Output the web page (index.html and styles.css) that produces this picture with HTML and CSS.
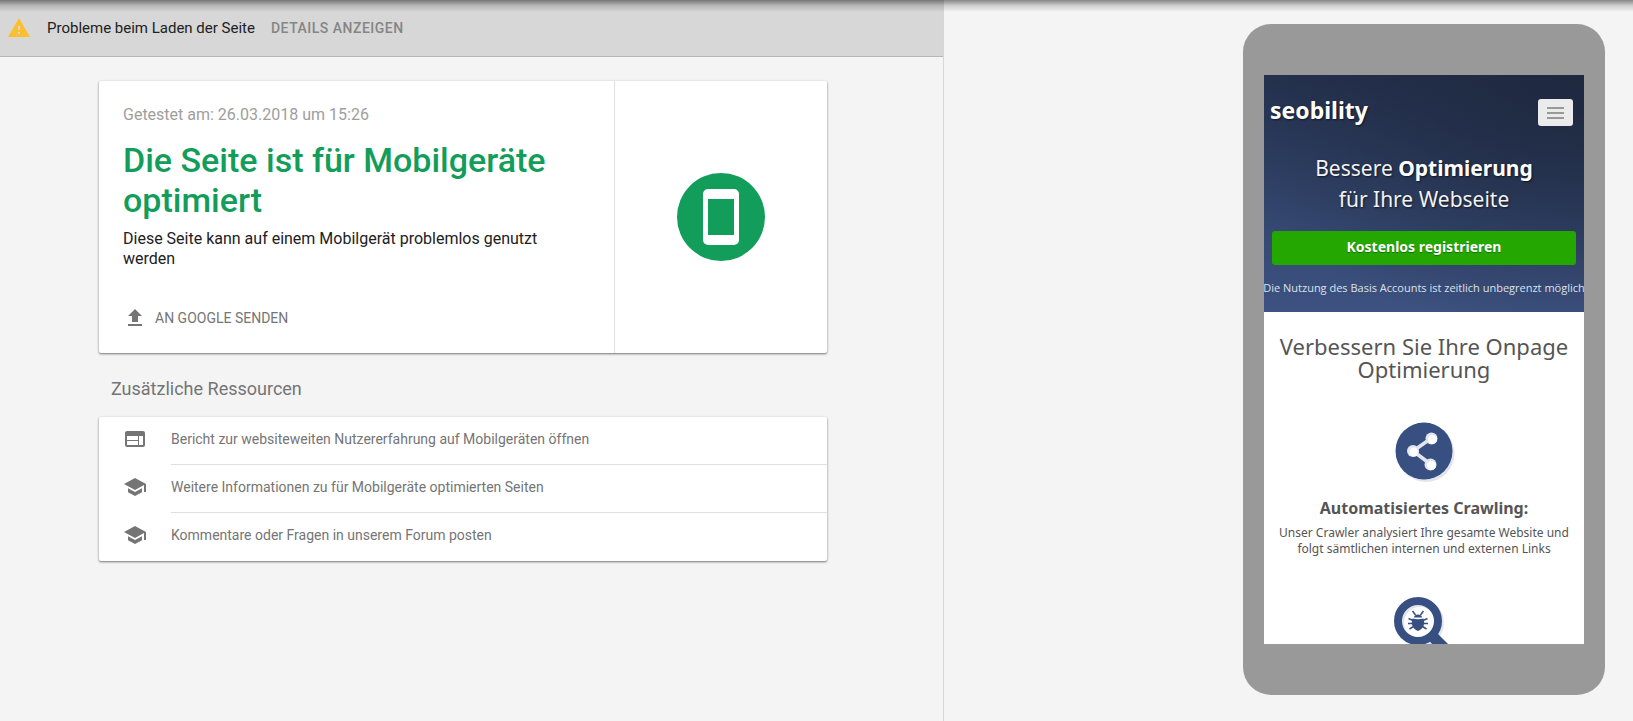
FILE: index.html
```html
<!DOCTYPE html>
<html lang="de">
<head>
<meta charset="utf-8">
<meta name="viewport" content="width=device-width, initial-scale=1">
<title>Test auf Optimierung für Mobilgeräte</title>
<link rel="stylesheet" href="styles.css">
</head>
<body>
<div class="page">
  <main class="results">
    <div class="notice">
      <svg class="icon notice-icon" viewBox="0 0 24 24" aria-hidden="true"><path d="M1 21h22L12 2 1 21zm12-3h-2v-2h2v2zm0-4h-2v-4h2v4z"/></svg>
      <span class="notice-text">Probleme beim Laden der Seite</span>
      <button class="text-button notice-button" type="button">DETAILS ANZEIGEN</button>
    </div>
    <div class="content">
      <section class="card verdict">
        <div class="verdict-body">
          <p class="tested">Getestet am: 26.03.2018 um 15:26</p>
          <h1 class="verdict-title">Die Seite ist für Mobilgeräte optimiert</h1>
          <p class="verdict-text">Diese Seite kann auf einem Mobilgerät problemlos genutzt werden</p>
          <button class="text-button submit" type="button">
            <svg class="icon" viewBox="0 0 24 24" aria-hidden="true"><path d="M9 16h6v-6h4l-7-7-7 7h4zm-4 2h14v2H5z"/></svg>
            AN GOOGLE SENDEN
          </button>
        </div>
        <div class="verdict-badge">
          <svg class="badge" viewBox="0 0 88 88" aria-hidden="true"><circle cx="44" cy="44" r="44" fill="#129d5a"/><path fill="#fff" fill-rule="evenodd" d="M31 16h26a5 5 0 0 1 5 5v46a5 5 0 0 1-5 5H31a5 5 0 0 1-5-5V21a5 5 0 0 1 5-5zm0 10v36h26V26z"/></svg>
        </div>
      </section>
      <h2 class="resources-title">Zusätzliche Ressourcen</h2>
      <ul class="card resources">
        <li class="resource">
          <svg class="icon" viewBox="0 0 24 24" aria-hidden="true"><path d="M20 4H4c-1.100 0-1.990.9-1.990 2L2 18c0 1.100.9 2 2 2h16c1.100 0 2-.9 2-2V6c0-1.100-.9-2-2-2zm-5 14H4v-4h11v4zm0-5H4V9h11v4zm5 5h-4V9h4v9z"/></svg>
          <a class="resource-link" href="#bericht">Bericht zur websiteweiten Nutzererfahrung auf Mobilgeräten öffnen</a>
        </li>
        <li class="resource">
          <svg class="icon" viewBox="0 0 24 24" aria-hidden="true"><path d="M5 13.180v4L12 21l7-3.820v-4L12 17l-7-3.820zM12 3L1 9l11 6 9-4.910V17h2V9L12 3z"/></svg>
          <a class="resource-link" href="#informationen">Weitere Informationen zu für Mobilgeräte optimierten Seiten</a>
        </li>
        <li class="resource">
          <svg class="icon" viewBox="0 0 24 24" aria-hidden="true"><path d="M5 13.180v4L12 21l7-3.820v-4L12 17l-7-3.820zM12 3L1 9l11 6 9-4.910V17h2V9L12 3z"/></svg>
          <a class="resource-link" href="#forum">Kommentare oder Fragen in unserem Forum posten</a>
        </li>
      </ul>
    </div>
  </main>
  <aside class="preview">
    <div class="phone">
      <div class="screen">
        <header class="hero">
          <div class="hero-bar">
            <span class="logo">seobility</span>
            <button class="menu" type="button" aria-label="Menü"><svg class="menu-icon" viewBox="0 0 17 12" aria-hidden="true"><path d="M0 1h17M0 6h17M0 11h17" stroke="#999" stroke-width="2"/></svg></button>
          </div>
          <p class="hero-title">Bessere <strong>Optimierung</strong><br>für Ihre Webseite</p>
          <button class="register" type="button">Kostenlos registrieren</button>
          <p class="hero-note">Die Nutzung des Basis Accounts ist zeitlich unbegrenzt möglich</p>
        </header>
        <div class="site-body">
          <h2 class="site-title">Verbessern Sie Ihre Onpage Optimierung</h2>
          <svg class="feature-icon" viewBox="0 0 64 64" aria-hidden="true">
            <circle cx="34" cy="34.500" r="28.500" fill="#e3e5ec"/><circle cx="32" cy="32" r="28.500" fill="#375081"/>
            <path d="M39 19.500L21 32l18 13.500" fill="none" stroke="#e3e5ec" stroke-width="3.600"/>
            <g fill="#e3e5ec"><circle cx="39.500" cy="19.500" r="6"/><circle cx="21" cy="32" r="6"/><circle cx="38.500" cy="45.500" r="6"/></g>
            <g fill="#fff"><circle cx="40.500" cy="20.500" r="4.500"/><circle cx="22" cy="33" r="4.500"/><circle cx="39.500" cy="46.500" r="4.500"/></g>
          </svg>
          <h3 class="feature-title">Automatisiertes Crawling:</h3>
          <p class="feature-text">Unser Crawler analysiert Ihre gesamte Website und folgt sämtlichen internen und externen Links</p>
          <svg class="feature-icon" viewBox="0 0 64 64" aria-hidden="true">
            <circle cx="28" cy="28" r="20" fill="none" stroke="#e3e5ec" stroke-width="8"/>
            <path d="M36 44l7-8 22 22-10 10z" fill="#375081"/>
            <circle cx="26" cy="26" r="20" fill="none" stroke="#375081" stroke-width="8"/>
            <g fill="#375081"><path d="M22 22.500c0-4 8-4 8 0zM20.500 23.500q5.500 1.500 11 0c1.500 5 .5 10-5.500 12.500-6-2.500-7-7.500-5.500-12.500z"/></g>
            <path d="M23.500 20l-3-4M28.500 20l3-4M21 25.500l-4.500-2M31 25.500l4.500-2M21 28.500h-5M31 28.500h5M21.500 31.500l-4 2.500M30.500 31.500l4 2.500" fill="none" stroke="#375081" stroke-width="1.500"/>
          </svg>
        </div>
      </div>
    </div>
  </aside>
</div>
</body>
</html>
```
FILE: styles.css
```css
* {
  box-sizing: border-box;
}

body {
  margin: 0;
  background: #f4f4f4;
  font-family: Roboto, "Liberation Sans", sans-serif;
  color: #212121;
}

h1, h2, h3, p, ul {
  margin: 0;
  padding: 0;
}

button {
  border: 0;
  padding: 0;
  background: none;
  font-family: inherit;
  cursor: pointer;
}

.page {
  position: relative;
  display: grid;
  grid-template-columns: minmax(0, 944fr) minmax(0, 689fr);
  min-height: 100vh;
}

/* Shadow cast by the application bar above the page */
.page::before {
  content: "";
  position: absolute;
  inset: 0 0 auto;
  height: 12px;
  background: linear-gradient(rgba(0, 0, 0, 0.45), rgba(0, 0, 0, 0.16) 45%, rgba(0, 0, 0, 0));
  pointer-events: none;
}

.results {
  border-right: 1px solid #d6d6d6;
}

.icon {
  flex: none;
  display: block;
  width: 24px;
  height: 24px;
  fill: #757575;
}

.notice {
  display: flex;
  align-items: center;
  height: 57px;
  padding: 0 7px;
  border-bottom: 1px solid #b8b8b8;
  background: #d7d7d7;
}

.notice-icon {
  fill: #fbc02d;
}

.notice-text {
  margin-left: 16px;
  font-size: 15px;
  line-height: 20px;
}

.text-button {
  color: #757575;
  font-size: 14px;
  font-weight: 500;
  line-height: 20px;
}

.notice-button {
  margin-left: 16px;
  color: #858585;
  letter-spacing: 0.5px;
}

.content {
  width: 728px;
  max-width: 100%;
  margin: 24px auto 0 99px;
}

.card {
  border-radius: 2px;
  background: #fff;
  box-shadow: 0 1px 3px rgba(0, 0, 0, 0.22), 0 1px 2px rgba(0, 0, 0, 0.36);
}

.verdict {
  display: flex;
}

.verdict-body {
  flex: 1;
  padding: 24px 24px 23px;
}

.tested {
  color: #9e9e9e;
  font-size: 16px;
  line-height: 20px;
}

.verdict-title {
  margin-top: 15px;
  color: #129d5a;
  font-size: 34px;
  font-weight: 500;
  line-height: 40px;
}

.verdict-text {
  margin-top: 9px;
  padding-right: 40px;
  font-size: 16px;
  line-height: 20px;
}

.submit {
  display: flex;
  align-items: center;
  gap: 8px;
  margin-top: 37px;
  font-weight: 400;
}

.verdict-badge {
  display: grid;
  place-items: center;
  width: 213px;
  border-left: 1px solid #e0e0e0;
}

.badge {
  display: block;
  width: 88px;
  height: 88px;
}

.resources-title {
  padding: 24px 12px 16px;
  color: #757575;
  font-size: 18px;
  font-weight: 400;
  line-height: 24px;
}

.resources {
  list-style: none;
}

.resource {
  display: flex;
  gap: 24px;
  height: 48px;
  padding-left: 24px;
}

.resource .icon {
  margin-top: 10px;
}

.resource-link {
  flex: 1;
  padding-top: 12px;
  border-bottom: 1px solid #e0e0e0;
  color: #757575;
  font-size: 14px;
  line-height: 20px;
  text-decoration: none;
}

.resource:last-child .resource-link {
  border-bottom: 0;
}

.preview {
  display: flex;
  align-items: flex-start;
  justify-content: flex-end;
  padding: 24px 28px;
}

.phone {
  padding: 51px 21px;
  border-radius: 28px;
  background: #999;
}

.screen {
  width: 320px;
  height: 569px;
  overflow: hidden;
  background: #fff;
  color: #555;
  font-family: "Noto Sans", sans-serif;
  text-align: center;
}

.hero {
  height: 237px;
  padding: 19px 8px 0;
  background: radial-gradient(ellipse 380px 260px at 100% 0, #1e283f, rgba(30, 40, 63, 0)), linear-gradient(#25324f, #34476f 60%, #3d5281);
  color: #f2f2f2;
  text-shadow: 1px 1px 2px rgba(0, 0, 0, 0.6);
}

.hero-bar {
  display: flex;
  align-items: flex-start;
  justify-content: space-between;
  padding-right: 3px;
}

.logo {
  margin-left: -2px;
  color: #fff;
  font-size: 23px;
  font-weight: 700;
  line-height: 32px;
}

.menu {
  display: grid;
  place-items: center;
  width: 35px;
  height: 27px;
  margin-top: 5px;
  border-radius: 3px;
  background: #ebebeb;
}

.menu-icon {
  width: 17px;
  height: 12px;
}

.hero-title {
  margin-top: 27px;
  font-size: 21px;
  line-height: 31px;
}

.hero-title strong {
  color: #fff;
}

.register {
  display: block;
  width: 100%;
  margin-top: 16px;
  padding: 6px 0 8px;
  border-radius: 3px;
  background: #24a800;
  color: #fff;
  font-size: 14px;
  font-weight: 700;
  line-height: 20px;
  text-shadow: 0 1px 1px rgba(0, 0, 0, 0.35);
}

.hero-note {
  margin: 15px -12px 0;
  color: #dde1ea;
  font-family: "Open Sans", "Noto Sans", sans-serif;
  font-size: 11px;
  line-height: 16px;
  text-shadow: none;
  white-space: nowrap;
}

.site-body {
  display: flex;
  flex-direction: column;
  align-items: center;
  padding: 23px 12px 0;
}

.site-title {
  font-size: 22px;
  font-weight: 400;
  line-height: 23px;
}

.feature-icon {
  flex: none;
  display: block;
  width: 64px;
  height: 64px;
  margin-top: 38px;
}

.feature-title {
  margin-top: 15px;
  font-size: 16px;
  line-height: 20px;
}

.feature-text {
  margin-top: 7px;
  font-size: 12px;
  line-height: 16px;
}
```
